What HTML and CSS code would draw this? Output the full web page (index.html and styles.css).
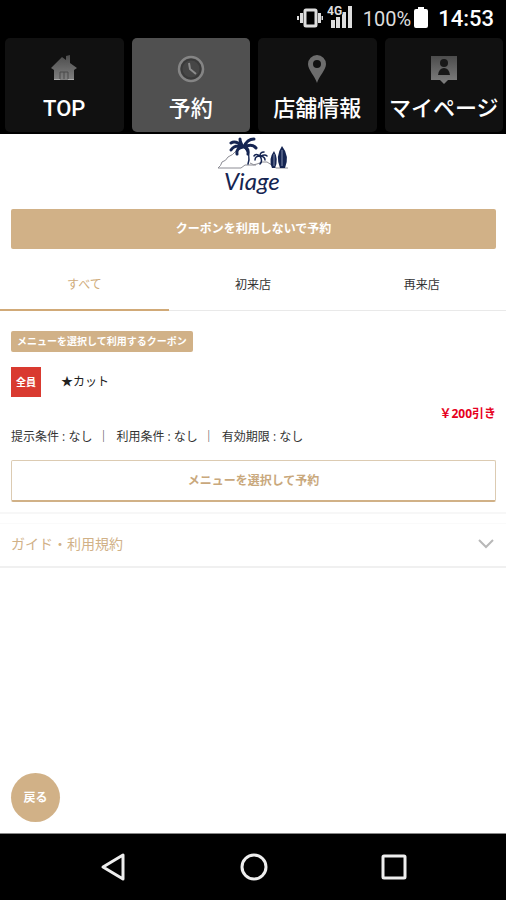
FILE: index.html
```html
<!DOCTYPE html>
<html lang="ja">
<head>
<meta charset="utf-8">
<meta name="viewport" content="width=device-width, initial-scale=1">
<title>Viage</title>
<link rel="stylesheet" href="styles.css">
</head>
<body>
<header class="top">
  <div class="status">
    <svg class="vibrate" width="26" height="20" viewBox="0 0 26 20" fill="none" stroke="#ddd" stroke-width="3"><rect x="8" y="2" width="11" height="16" rx="1"/><path d="M4.500 5v10M22.500 5v10"/><path d="M1 8v4M25.500 8v4" stroke-width="2"/></svg>
    <svg class="signal" width="26" height="26" viewBox="0 0 26 26"><g fill="#ddd"><path d="M4 17h4v8H4zM9 14h4v11H9zM15 9h4v16h-4zM21 3h4v22h-4z"/><text x="0" y="12" class="network">4G</text></g></svg>
    <span class="percent">100%</span>
    <svg class="battery" width="14" height="21" viewBox="0 0 14 21" fill="#fff"><path d="M4 0h6v2h2q2 0 2 2v15q0 2-2 2H2q-2 0-2-2V4q0-2 2-2h2z"/></svg>
    <time class="clock">14:53</time>
  </div>
  <nav class="menu">
    <a class="tile" href="#top">
      <svg width="28" height="30" viewBox="0 0 28 30"><defs><linearGradient id="metal" x1="0" y1="0" x2="0" y2="1"><stop offset="0" stop-color="#4c4c4c"/><stop offset="1" stop-color="#808080"/></linearGradient></defs><path fill="url(#metal)" d="M1 14 12 3l4 3V2l4-1v8l7 5-3 2v10H4V16z"/><path fill="none" stroke="#4a4a4a" d="M10 25v-7h8v7M14 18v7"/><path stroke="#aaa" d="M4 25.500h6M18 25.500h6"/></svg>
      <span>TOP</span>
    </a>
    <a class="tile active" href="#reserve" aria-current="page">
      <svg width="28" height="30" viewBox="0 0 28 30"><circle cx="14" cy="15" r="12" fill="#555" stroke="#858585" stroke-width="2.500"/><circle cx="14" cy="15" r="9.500" fill="#464646" stroke="#3a3a3a" stroke-width="2"/><path d="M12 9l1 6 6 5" fill="none" stroke="#8c8c8c" stroke-width="2"/></svg>
      <span>予約</span>
    </a>
    <a class="tile" href="#shop">
      <svg width="28" height="30" viewBox="0 0 28 30"><path fill="#6d6d6d" fill-rule="evenodd" d="M14 29C12 22 5 16 5 10a9 9 0 0 1 18 0c0 6-7 12-9 19zM14 6a4 4 0 1 0 0 8 4 4 0 0 0 0-8z"/></svg>
      <span>店舗情報</span>
    </a>
    <a class="tile" href="#mypage">
      <svg width="28" height="30" viewBox="0 0 28 30"><path fill="url(#metal)" d="M1 2h26v24h-9l-4 4-4-4H1z"/><g fill="#181818"><circle cx="14" cy="9" r="4"/><path d="M8 21q1-7 6-7t6 7z"/></g></svg>
      <span>マイページ</span>
    </a>
  </nav>
</header>
<main class="page">
  <svg class="logo" width="74" height="64" viewBox="0 0 74 64" role="img" aria-label="Viage">
    <g fill="none" stroke="#8c8c94"><path d="M2 34h23l4-3h11M2 34q3-2 4-6 4-1 6-5 5-2 8-6M34 29q4 3 7 1 5-3 10-2 5 3 9 6h12"/></g>
    <g fill="none" stroke="#152552" stroke-linecap="round">
      <path stroke-width="3" d="M27 13Q20 6 15 9M27 13q-8-3-12 3M27 13q-7 1-6 7M27 13q-3-5-3-8M28 13q3-8 10-8M28 13q8-4 12 1M28 13q5 1 4 7"/>
      <path stroke-width="1.500" d="M29 14q6 7 3 16"/>
      <path stroke-width="1.500" d="M44 22q-4-3-6 0M44 22q-5 0-5 4M44 22q0-4 4-4M45 22q4-2 6 0M45 22q4 1 4 4M44 22q3 5 0 8"/>
    </g>
    <g fill="#152552"><path d="M58 17q5 8 1 17h-3q-4-9 2-17zM66 12q8 10 3 22h-5q-5-12 2-22z"/></g>
    <path stroke="#8490ae" d="M58 20v12M66 16v16"/>
    <text x="8" y="56" class="wordmark">Viage</text>
  </svg>
  <button class="button solid" type="button">クーポンを利用しないで予約</button>
  <div class="filters" role="tablist">
    <button class="filter selected" type="button" role="tab" aria-selected="true">すべて</button>
    <button class="filter" type="button" role="tab" aria-selected="false">初来店</button>
    <button class="filter" type="button" role="tab" aria-selected="false">再来店</button>
  </div>
  <section class="coupon">
    <p class="tag">メニューを選択して利用するクーポン</p>
    <div class="title">
      <span class="badge">全員</span>
      <h2>★カット</h2>
    </div>
    <p class="discount">￥200引き</p>
    <ul class="terms">
      <li>提示条件 : なし</li>
      <li>利用条件 : なし</li>
      <li>有効期限 : なし</li>
    </ul>
    <button class="button outline" type="button">メニューを選択して予約</button>
  </section>
  <button class="guide" type="button">
    <span>ガイド・利用規約</span>
    <svg width="16" height="10" viewBox="0 0 16 10" fill="none" stroke="#b8b8b8" stroke-width="2"><path d="M1 1l7 7 7-7"/></svg>
  </button>
  <button class="back" type="button">戻る</button>
</main>
<footer class="system">
  <button type="button" aria-label="戻る"><svg width="30" height="30" viewBox="0 0 30 30"><path d="M5 15 25 3v24z"/></svg></button>
  <button type="button" aria-label="ホーム"><svg width="30" height="30" viewBox="0 0 30 30"><circle cx="15" cy="15" r="12"/></svg></button>
  <button type="button" aria-label="履歴"><svg width="30" height="30" viewBox="0 0 30 30"><rect x="4" y="4" width="22" height="22" rx="1"/></svg></button>
</footer>
</body>
</html>
```
FILE: styles.css
```css
* {
  box-sizing: border-box;
}

body {
  margin: 0;
  min-height: 100vh;
  display: flex;
  flex-direction: column;
  background: #fff;
  color: #333;
  font: 12px/20px "Open Sans", "Noto Sans CJK JP", sans-serif;
}

button {
  padding: 0;
  border: 0;
  background: none;
  color: inherit;
  font: inherit;
  cursor: pointer;
}

h2,
p,
ul {
  margin: 0;
  padding: 0;
}

svg {
  display: block;
  flex: none;
}

.top {
  background: #000;
  color: #fff;
  font-family: Roboto, "Noto Sans CJK JP", sans-serif;
}

.status {
  height: 38px;
  padding: 0 12px;
  display: flex;
  align-items: center;
  justify-content: flex-end;
}

.vibrate {
  margin: 0 4px 3px 0;
}

.signal {
  margin: 0 10px 6px 0;
}

.network {
  font: bold 12px Roboto, sans-serif;
  stroke: #000;
  stroke-width: 2px;
  paint-order: stroke;
}

.percent {
  color: #ddd;
  font-size: 20px;
}

.battery {
  margin: 0 10px 4px 3px;
}

.clock {
  font-size: 22px;
  font-weight: 500;
}

.menu {
  display: grid;
  grid-template-columns: repeat(4, 1fr);
  gap: 8px;
  padding: 0 3px 2px 5px;
}

.tile {
  min-width: 0;
  height: 94px;
  padding-top: 16px;
  display: flex;
  flex-direction: column;
  align-items: center;
  gap: 8px;
  border-radius: 5px;
  background: #111;
  color: #fff;
  font-size: 22px;
  font-weight: 500;
  line-height: 34px;
  text-decoration: none;
  white-space: nowrap;
}

.tile.active {
  background: #505050;
}

.page {
  flex: 1;
  display: flex;
  flex-direction: column;
}

.logo {
  align-self: center;
  margin-bottom: 11px;
}

.wordmark {
  fill: #152552;
  font: italic 24px Lato, sans-serif;
}

.button {
  height: 40px;
  border-radius: 2px;
  font-weight: bold;
}

.solid {
  margin: 0 10px 0 11px;
  background: #d1b187;
  color: #fff;
}

.outline {
  height: 42px;
  margin-top: 13px;
  border: 1px solid #dccbb2;
  border-bottom: 2px solid #d1b187;
  color: #c9a87c;
}

.filters {
  display: grid;
  grid-template-columns: repeat(3, 1fr);
  margin-top: 8px;
  border-bottom: 1px solid #e9e9e9;
}

.filter {
  height: 54px;
  margin-bottom: -1px;
  padding-top: 4px;
  border-bottom: 2px solid transparent;
}

.filter.selected {
  border-color: #d1aa78;
  color: #cfac7b;
}

.coupon {
  display: flex;
  flex-direction: column;
  padding: 20px 10px 10px 11px;
  border-bottom: 2px solid #f7f7f7;
}

.tag {
  align-self: flex-start;
  padding: 0 6px;
  border-radius: 2px;
  background: #d1b187;
  color: #fff;
  font-size: 10px;
  font-weight: bold;
  line-height: 21px;
}

.title {
  display: flex;
  align-items: center;
  gap: 20px;
  margin-top: 15px;
}

.badge {
  width: 30px;
  background: #d93a30;
  color: #fff;
  font-size: 10px;
  font-weight: bold;
  line-height: 30px;
  text-align: center;
}

.title h2 {
  color: #222;
  font-size: 12px;
  font-weight: normal;
}

.discount {
  margin-top: 7px;
  color: #e60020;
  font-weight: bold;
  text-align: right;
}

.terms {
  display: flex;
  flex-wrap: wrap;
  margin-top: 3px;
  list-style: none;
}

.terms li + li::before {
  content: "｜";
  margin: 0 7px 0 5px;
}

.guide {
  display: flex;
  align-items: center;
  justify-content: space-between;
  height: 45px;
  margin-top: 9px;
  padding: 0 12px 2px 11px;
  border-top: 1px solid #fafafa;
  border-bottom: 2px solid #f0f0f0;
  color: #d1b187;
  font-size: 14px;
}

.back {
  width: 49px;
  height: 49px;
  margin: auto 0 11px 11px;
  border-radius: 50%;
  background: #d1b187;
  color: #fff;
  font-weight: bold;
}

.system {
  display: flex;
  justify-content: space-between;
  height: 67px;
  padding: 0 97px 0 98px;
  align-items: center;
  border-top: 1px solid #888;
  background: #000;
}

.system svg {
  fill: none;
  stroke: #eee;
  stroke-width: 3px;
  stroke-linejoin: round;
}
```
